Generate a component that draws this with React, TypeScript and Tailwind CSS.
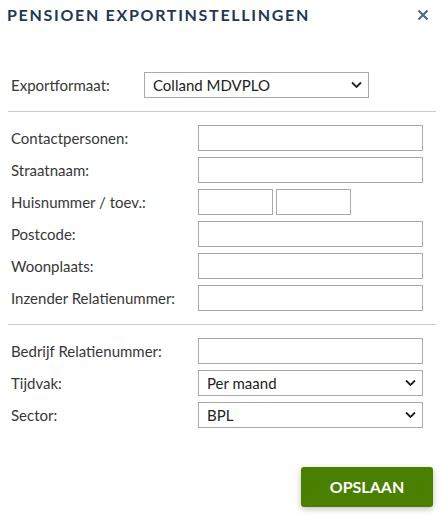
import { useState } from "react";

const font = { fontFamily: "Lato, 'Open Sans', sans-serif" };

function Chevron() {
  return (
    <svg
      width="11"
      height="7"
      viewBox="0 0 11 7"
      className="pointer-events-none absolute right-[7px] top-1/2 -translate-y-1/2"
    >
      <path d="M1 1l4.5 4.5L10 1" fill="none" stroke="#222" strokeWidth="1.8" />
    </svg>
  );
}

function SelectBox({
  value,
  options,
  className,
}: {
  value: string;
  options: string[];
  className: string;
}) {
  const [current, setCurrent] = useState(value);
  return (
    <div className={`relative h-[26px] ${className}`}>
      <select
        value={current}
        onChange={(e) => setCurrent(e.target.value)}
        className="h-full w-full appearance-none border border-[#a9a9a9] bg-white pl-[8px] text-[15px] text-[#222] outline-none"
        style={font}
      >
        {options.map((o) => (
          <option key={o}>{o}</option>
        ))}
      </select>
      <Chevron />
    </div>
  );
}

function Row({ label, children }: { label: string; children: React.ReactNode }) {
  return (
    <div className="flex h-[26px] items-center">
      <label className="w-[187px] shrink-0 text-[15px] text-[#383838]">{label}</label>
      {children}
    </div>
  );
}

function TextInput({ className = "w-[225px]" }: { className?: string }) {
  return (
    <input
      type="text"
      className={`h-[26px] border border-[#a9a9a9] bg-white outline-none ${className}`}
    />
  );
}

export default function App() {
  return (
    <div className="h-[515px] w-[444px] bg-white" style={font}>
      <div className="flex items-center justify-between pl-[7px] pr-[15px] pt-[5px]">
        <h1 className="text-[16px] font-bold uppercase leading-[20px] tracking-[1.7px] text-[#1e3856]">
          Pensioen exportinstellingen
        </h1>
        <button type="button" aria-label="Sluiten" className="text-[#4d6b8c]">
          <svg width="12" height="12" viewBox="0 0 12 12">
            <path d="M1.5 1.5l9 9M10.5 1.5l-9 9" stroke="currentColor" strokeWidth="2.2" />
          </svg>
        </button>
      </div>

      <div className="mt-[47px] flex h-[26px] items-center pl-[11px]">
        <label className="w-[133px] shrink-0 text-[15px] text-[#383838]">Exportformaat:</label>
        <SelectBox
          value="Colland MDVPLO"
          options={["Colland MDVPLO", "PGGM", "PFZW"]}
          className="w-[225px]"
        />
      </div>

      <div className="mx-[8px] mt-[13px] h-px bg-[#cccccc]" />

      <div className="mt-[13px] flex flex-col gap-[6px] pl-[11px]">
        <Row label="Contactpersonen:">
          <TextInput />
        </Row>
        <Row label="Straatnaam:">
          <TextInput />
        </Row>
        <Row label="Huisnummer / toev.:">
          <div className="flex gap-[3px]">
            <TextInput className="w-[75px]" />
            <TextInput className="w-[75px]" />
          </div>
        </Row>
        <Row label="Postcode:">
          <TextInput />
        </Row>
        <Row label="Woonplaats:">
          <TextInput />
        </Row>
        <Row label="Inzender Relatienummer:">
          <TextInput />
        </Row>
      </div>

      <div className="mx-[8px] mt-[13px] h-px bg-[#cccccc]" />

      <div className="mt-[13px] flex flex-col gap-[6px] pl-[11px]">
        <Row label="Bedrijf Relatienummer:">
          <TextInput />
        </Row>
        <Row label="Tijdvak:">
          <SelectBox
            value="Per maand"
            options={["Per maand", "Per vier weken", "Per kwartaal"]}
            className="w-[225px]"
          />
        </Row>
        <Row label="Sector:">
          <SelectBox value="BPL" options={["BPL", "Hoveniers", "Groen"]} className="w-[225px]" />
        </Row>
      </div>

      <div className="mt-[39px] flex justify-end pr-[11px]">
        <button
          type="button"
          className="h-[40px] w-[132px] rounded-[3px] bg-[#4a7f00] text-[16px] font-bold text-white shadow-[0_2px_6px_rgba(0,0,0,0.25)]"
        >
          OPSLAAN
        </button>
      </div>
    </div>
  );
}
